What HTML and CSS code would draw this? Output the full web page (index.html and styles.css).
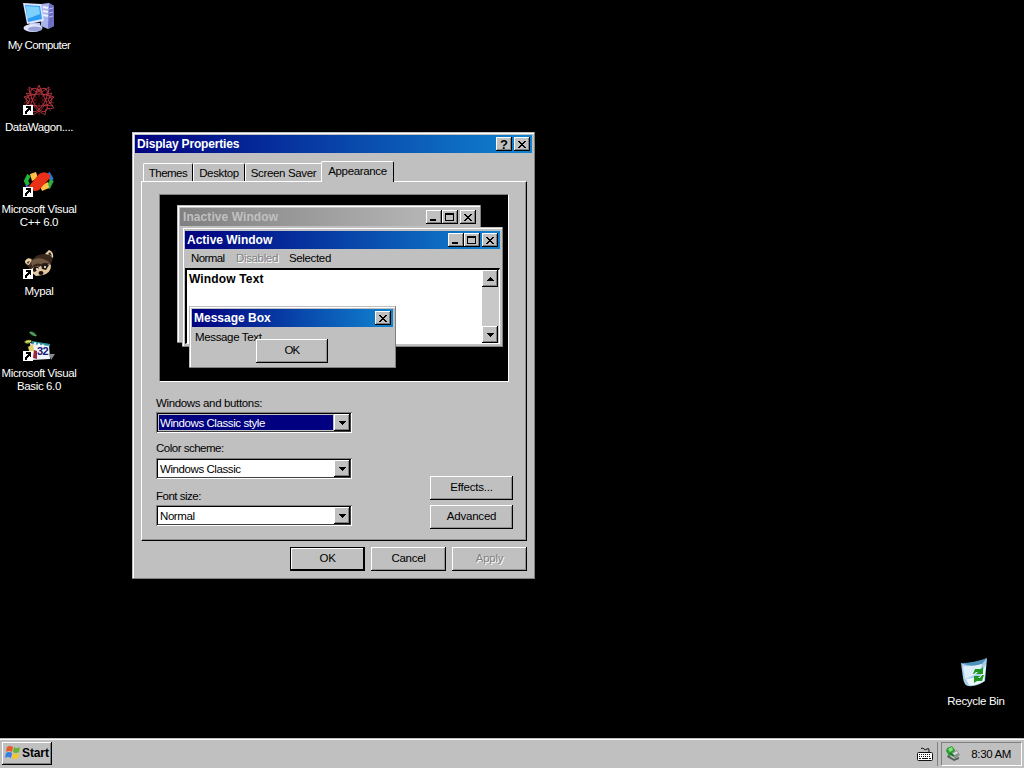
FILE: index.html
```html
<!DOCTYPE html>
<html lang="en">
<head>
<meta charset="utf-8">
<title>Desktop</title>
<link rel="stylesheet" href="styles.css">
</head>
<body>
<main class="desktop">
  <nav class="icons">
    <div class="icon">
      <svg width="32" height="32" viewBox="0 0 32 32">
        <path d="M18 2l8-1 5 3v20l-6 3-7-3z" fill="#aab4ec"/><path d="M26 1l5 3v20l-6 3z" fill="#6c70c4"/><path d="M20 5l5 1M20 9l5 1M20 13l5 1" stroke="#eef" stroke-width="2"/><path d="M26 7l4-1M26 11l4-1M26 15l4-1" stroke="#b9c0f4"/>
        <path d="M7 20l10 1 1 5-12-1z" fill="#b8bfe9"/><ellipse cx="10" cy="26" rx="9.500" ry="4" fill="#dfe4fb"/><ellipse cx="12" cy="27" rx="7" ry="2.500" fill="#9aa0d8"/>
        <path d="M0 1l18 1 3 17-17 3z" fill="#dce4ff"/><path d="M2 3l15 1 2 13-14 3z" fill="#2c9cf4"/><path d="M3 4l13 1 1 7-13 5z" fill="#7ed0ff"/>
      </svg>
      <span class="computer">My Computer</span>
    </div>
    <div class="icon">
      <svg width="32" height="32" viewBox="0 0 32 32">
        <g fill="none" stroke="#b23540" stroke-width=".9">
          <path stroke="#7c1c22" d="M4 5l24 22M28 5L4 27M16 1v30M1 13l30 6M31 13L1 19"/>
          <path d="M16 1l3 7 7-5-1 8 6 2-5 5 5 6-8 1-1 6-6-4-6 4-1-6-8-1 5-6-5-5 6-2-1-8 7 5z"/>
          <path d="M16 5l5 6 8-2-4 7 5 6-8-1-6 7-6-7-8 1 5-6-4-7 8 2z"/>
          <ellipse cx="16" cy="16" rx="13" ry="6"/><ellipse cx="16" cy="16" rx="13" ry="6" transform="rotate(60 16 16)"/><ellipse cx="16" cy="16" rx="13" ry="6" transform="rotate(120 16 16)"/>
        </g>
        <circle cx="16" cy="16" r="3" fill="#160002"/>
        <use href="#shortcut"/>
      </svg>
      <span>DataWagon....</span>
    </div>
    <div class="icon">
      <svg width="32" height="32" viewBox="0 0 32 32">
        <path d="M6 9L3 15l2 4" fill="none" stroke="#20b535" stroke-width="4"/><path d="M25 7l4 7" stroke="#2877d8" stroke-width="4"/><path d="M29 14l-4 8" stroke="#31a944" stroke-width="4"/>
        <path d="M7 8l6-2 2 6-6 3z" fill="#ffc247"/><path d="M17 20l8-4 1 6-7 3z" fill="#ffc247"/>
        <path d="M6 20L16 8q6-4 11 1v3L16 24q-8 3-10-4z" fill="#e83116"/>
        <path d="M3 19l4 4" stroke="#3c65cc" stroke-width="2"/>
        <use href="#shortcut"/>
      </svg>
      <span>Microsoft Visual<br>C++ 6.0</span>
    </div>
    <div class="icon">
      <svg width="32" height="32" viewBox="0 0 32 32">
        <path d="M2 13q3-5 8-2 4-5 12-5l4-4q5 1 4 8l-2 6q1 7-5 9l-8 3-7-3-3-7q-4-1-3-5z" fill="#3a281d"/>
        <path d="M2 13q3-5 7-1l-3 5q-4-1-4-4zM22 6l4-4q5 2 4 8l-3-3z" fill="#e7cfa8"/><path d="M4 14l3-1-2 3zM25 6l2-2 2 4z" fill="#292019"/>
        <path d="M8 13q8-6 18 1l2 3q-5-4-10-1-6-2-9 3z" fill="#705943"/>
        <path d="M8 21q5-4 8-2 6-5 12-2 0 8-8 10l-7 1-5-4z" fill="#e2c7a0"/>
        <path d="M11 19q3-2 5 1l-4 4-3-1zM18 17q5-3 8 0l-3 5-4-1z" fill="#221914"/><circle cx="14" cy="21" r="1" fill="#fff"/><circle cx="22" cy="19" r="1" fill="#fff"/><ellipse cx="18" cy="25" rx="2.500" ry="2" fill="#17100d"/>
        <use href="#shortcut"/>
      </svg>
      <span>Mypal</span>
    </div>
    <div class="icon">
      <svg width="32" height="32" viewBox="0 0 32 32">
        <path d="M6 2q5-2 8 4-6 1-8-4z" fill="#287a3b"/><path d="M7 2l6 4" stroke="#88b38c"/>
        <path d="M1 12q4-4 8-1-4 5-8 1z" fill="#99a62f"/><path d="M3 12l5-1" stroke="#e9ed9c"/>
        <path d="M7 13l19 1 1 15-18 1z" fill="#eef5fa"/><path d="M9 11l18 3v2L8 14z" fill="#2792a2"/><path d="M11 13l2 1m2 0l2 1m2 0l2 1" stroke="#fff" stroke-width="2"/>
        <path d="M11 20l3 1v8l-4-1z" fill="#9e2640"/><path d="M26 24h6l-4 6z" fill="#898989"/><path d="M5 17l5-3 1 7-4 3z" fill="#e3cf65"/>
        <text x="14" y="25" class="glyph32">32</text>
        <use href="#shortcut"/>
      </svg>
      <span>Microsoft Visual<br>Basic 6.0</span>
    </div>
    <svg width="0" height="0"><defs><g id="shortcut"><path d="M0 21h10v10H0z" fill="#fff"/><path d="M3 22h5v5H7v-1H6v1H5v1H4v2H2v-3h1v-1h1v-1h1v-1H3z" fill="#000"/></g></defs></svg>
  </nav>

  <div class="icon recycle">
    <svg width="32" height="32" viewBox="0 0 32 32">
      <path d="M1 5q7 2 13 0 7-1 13-5l-2 23q-8 6-17 5-4-1-5-8z" fill="#a9cfea"/><path d="M1 5q13 0 26-5l-5 6q-10 4-21-1z" fill="#4f91bd"/><path d="M3 8q9 1 19-2l-3 9-14 6z" fill="#deeff9"/><path d="M6 21l14-2 6-13-2 17q-8 5-15 4z" fill="#eef8ff"/>
      <path d="M13 16l2-5h6l2-2v7h-7l2-2h-2l-2 2zM24 17l-2 6h-5l-3 2v-7h6l-2 2h2l2-3z" fill="#219621"/>
    </svg>
    <span>Recycle Bin</span>
  </div>

  <section class="window dialog">
    <header class="title main"><span>Display Properties</span><i class="grow"></i>
      <button class="sys q">?</button><button class="sys gap2"><svg width="8" height="7"><use href="#x"/></svg></button>
    </header>
    <div class="tabs">
      <span class="tab themes">Themes</span><span class="tab desk">Desktop</span><span class="tab saver">Screen Saver</span><span class="tab on">Appearance</span>
    </div>
    <div class="panel">
      <div class="preview">
        <div class="window inactive">
          <div class="title dim"><span>Inactive Window</span><i class="grow"></i>
            <b class="sys"><svg width="8" height="7"><use href="#min"/></svg></b><b class="sys"><svg width="10" height="8"><use href="#max"/></svg></b><b class="sys gap2"><svg width="8" height="7"><use href="#x"/></svg></b></div>
        </div>
        <div class="window active">
          <div class="title"><span>Active Window</span><i class="grow"></i>
            <b class="sys"><svg width="8" height="7"><use href="#min"/></svg></b><b class="sys"><svg width="10" height="8"><use href="#max"/></svg></b><b class="sys gap2"><svg width="8" height="7"><use href="#x"/></svg></b></div>
          <div class="menu"><span class="m1">Normal</span><span class="m2 disabled">Disabled</span><span>Selected</span></div>
          <div class="doc"><span class="t-doc">Window Text</span><div class="scroll"><b class="arrow"><svg width="7" height="4"><use href="#up"/></svg></b><b class="arrow"><svg width="7" height="4"><use href="#down"/></svg></b></div></div>
        </div>
        <div class="window message">
          <div class="title"><span>Message Box</span><i class="grow"></i><b class="sys"><svg width="8" height="7"><use href="#x"/></svg></b></div>
          <div class="msgtext">Message Text</div>
          <div class="btn msgok">OK</div>
        </div>
      </div>
      <div class="form">
        <div class="fields">
          <label class="l1">Windows and buttons:</label>
          <div class="combo"><span class="val sel">Windows Classic style</span><b class="arrow"><svg width="7" height="4"><use href="#down"/></svg></b></div>
          <label class="l2">Color scheme:</label>
          <div class="combo"><span class="val">Windows Classic</span><b class="arrow"><svg width="7" height="4"><use href="#down"/></svg></b></div>
          <label class="l3">Font size:</label>
          <div class="combo"><span class="val">Normal</span><b class="arrow"><svg width="7" height="4"><use href="#down"/></svg></b></div>
        </div>
        <div class="side"><button class="btn">Effects...</button><button class="btn">Advanced</button></div>
      </div>
    </div>
    <footer class="actions"><button class="btn default">OK</button><button class="btn">Cancel</button><button class="btn disabled">Apply</button></footer>
    <svg width="0" height="0"><defs>
      <path id="x" shape-rendering="crispEdges" d="M0 0h2v1h1v1h2V1h1V0h2v1H7v1H6v1H5v1h1v1h1v1h1v1H6V6H5V5H3v1H2v1H0V6h1V5h1V4h1V3H2V2H1V1H0z"/>
      <path id="min" d="M0 5h6v2H0z"/>
      <path id="max" fill-rule="evenodd" d="M0 0h9v8H0zM1 2v5h7V2z"/>
      <path id="up" shape-rendering="crispEdges" d="M3 0h1v1h1v1h1v1h1v1H0V3h1V2h1V1h1z"/>
      <path id="down" shape-rendering="crispEdges" d="M0 0h7v1H6v1H5v1H4v1H3V3H2V2H1V1H0z"/>
    </defs></svg>
  </section>
</main>
<footer class="taskbar">
  <button class="start">
    <svg width="17" height="16" viewBox="0 0 17 16"><path d="M3 2q3-2 6 0L8 7Q5 5 2 7z" fill="#e65a27"/><path d="M10 2q3 2 6 0l-1 5q-3 2-6 0z" fill="#65b632"/><path d="M2 8q3-2 6 0l-1 5q-3-2-6 0z" fill="#347de1"/><path d="M9 8q3 2 6 0l-1 5q-3 2-6 0z" fill="#f5c52b"/></svg>
    <span>Start</span>
  </button>
  <i class="grow"></i>
  <svg class="kbd" width="18" height="15" viewBox="0 0 18 15"><path d="M5 1.500q2-1 3 .5t3 0 2 1v2" fill="none" stroke="#111"/><rect x="1.500" y="5.500" width="15" height="8" rx="1" fill="#fff" stroke="#111"/><path d="M3 7.500h12M3 9.500h12" stroke="#111" stroke-dasharray="1 1"/><path d="M3 11.500h2m1 0h6m1 0h2" stroke="#111"/></svg>
  <div class="tray">
    <svg width="16" height="17" viewBox="0 0 16 17"><path d="M2 2l5-2 3 4-1 5-5 1-3-5z" fill="#2f9f35"/><path d="M3 3l4-2 1 3-3 2z" fill="#8be07d"/><path d="M6 7l6-3 3 5-5 4z" fill="#8c9393"/><path d="M7 8l5-3 1 2-5 3z" fill="#d8dfdc"/><path d="M3 9l6 4 5-2v2l-5 2-7-4z" fill="#53605b"/><path d="M5 7l4 3" stroke="#127a21" stroke-width="2"/></svg>
    <span>8:30 AM</span>
  </div>
</footer>
</body>
</html>
```

FILE: styles.css
```css
* { box-sizing: border-box; }
body { margin: 0; width: 1024px; height: 768px; overflow: hidden; display: flex; flex-direction: column; background: #000; color: #000; font: 11.5px/13px "Liberation Sans", Arial, sans-serif; letter-spacing: -.35px; white-space: nowrap; }
button { font: inherit; letter-spacing: inherit; color: inherit; border: 0; padding: 0; }
svg { display: block; flex: none; }
.grow { flex: 1; }
.desktop { position: relative; flex: 1; }

/* Desktop icons */
.icons { width: 78px; padding-top: 2px; display: flex; flex-direction: column; }
.icon { height: 82px; display: flex; flex-direction: column; align-items: center; gap: 5px; color: #fff; text-align: center; letter-spacing: -.38px; }
.computer { letter-spacing: -.6px; }
.recycle { position: absolute; left: 936px; top: 658px; width: 80px; letter-spacing: -.3px; }
.glyph32 { font: bold 11px "Liberation Sans", sans-serif; fill: #171a78; letter-spacing: -.5px; }

/* Windows and title bars */
.window { background: #c0c0c0; padding: 3px; box-shadow: inset -1px -1px #808080, inset 1px 1px #c0c0c0, inset 2px 2px #fff; }
.dialog { position: absolute; left: 132px; top: 132px; width: 403px; height: 447px; display: flex; flex-direction: column; }
.title { height: 18px; display: flex; align-items: center; padding: 0 2px; color: #fff; font-size: 12px; font-weight: bold; background: linear-gradient(90deg, #000080, #1084d0); letter-spacing: 0; }
.title.main { letter-spacing: -.18px; }
.title.dim { padding-left: 3px; color: #c0c0c0; background: linear-gradient(90deg, #808080, #c0c0c0); letter-spacing: .08px; }
.sys { width: 16px; height: 14px; display: flex; align-items: center; justify-content: center; background: #c0c0c0; color: #000; box-shadow: inset -1px -1px #000, inset 1px 1px #fff, inset -2px -2px #808080; }
.sys.gap2 { margin-left: 2px; }
.q { font-weight: bold; font-size: 13px; }

/* Tabs and panel */
.tabs { height: 21px; margin: 7px 0 0 8px; display: flex; align-items: flex-end; }
.tab { height: 18px; padding-top: 3px; text-align: center; border: solid #fff; border-width: 1px 1px 0 1px; border-right-color: #000; border-radius: 2px 2px 0 0; }
.themes { width: 50px; letter-spacing: -.5px; }
.desk { width: 52px; }
.saver { width: 77px; }
.tab.on { position: relative; z-index: 1; width: 73px; height: 21px; margin: 0 0 -1px -1px; background: #c0c0c0; }
.panel { height: 360px; margin: 0 5px 0 6px; border: 1px solid #fff; border-right-color: #000; border-bottom-color: #000; box-shadow: inset -1px -1px #909090; padding: 12px 13px 0 17px; }

/* Appearance preview */
.preview { position: relative; width: 350px; height: 188px; background: #000; border: 1px solid #808080; border-right-color: #fff; border-bottom-color: #fff; }
.inactive { position: absolute; left: 17px; top: 10px; width: 304px; height: 138px; }
.active { position: absolute; left: 22px; top: 32px; width: 321px; height: 120px; padding-top: 4px; }
.message { position: absolute; left: 29px; top: 111px; width: 207px; height: 62px; }
.menu { display: flex; height: 19px; padding: 3px 0 0 6px; }
.m1 { width: 45px; letter-spacing: -.6px; }
.m2 { width: 53px; }
.disabled { color: #808080; text-shadow: 1px 1px #fff; }
.doc { height: 76px; display: flex; justify-content: space-between; padding-left: 2px; background: #fff; border: 2px solid #000; border-width: 2px 1px 1px 2px; border-right-color: #fff; border-bottom-color: #fff; font-size: 12px; font-weight: bold; letter-spacing: .15px; }
.t-doc { padding-top: 3px; }
.scroll { width: 17px; background: #c8c8c8; display: flex; flex-direction: column; justify-content: space-between; }
.arrow { width: 16px; height: 17px; display: flex; align-items: center; justify-content: center; background: #c0c0c0; box-shadow: inset -1px -1px #000, inset 1px 1px #fff, inset -2px -2px #808080; }
.msgtext { padding: 4px 0 0 3px; }
.btn { display: flex; align-items: center; justify-content: center; background: #c0c0c0; height: 24px; width: 75px; padding-bottom: 2px; box-shadow: inset -1px -1px #000, inset 1px 1px #fff, inset -2px -2px #909090; }
.btn.msgok { position: absolute; left: 67px; top: 33px; width: 72px; padding-bottom: 1px; letter-spacing: -.9px; }

/* Form */
.form { display: flex; justify-content: space-between; margin-left: -3px; }
.fields { width: 196px; }
.fields label { display: block; height: 30px; padding-top: 15px; }
.fields .l2 { height: 25px; padding-top: 9px; letter-spacing: -.5px; }
.fields .l3 { height: 26px; padding-top: 11px; letter-spacing: -.5px; }
.combo { height: 21px; display: flex; background: #fff; padding: 2px; box-shadow: inset 1px 1px #808080, inset -1px -1px #fff, inset 2px 2px #000, inset -2px -2px #404040; }
.val { flex: 1; padding: 3px 0 0 2px; letter-spacing: -.42px; }
.sel { background: #000080; color: #fff; box-shadow: inset 0 0 0 1px #c0c0c0; }
.side { padding-top: 94px; display: flex; flex-direction: column; gap: 5px; }
.side .btn { width: 83px; letter-spacing: -.2px; }
.actions { display: flex; justify-content: flex-end; gap: 6px; padding: 6px 5px 0 0; }
.actions .btn { letter-spacing: -.3px; }
.default { box-shadow: inset 0 0 0 1px #000, inset -2px -2px #000, inset 2px 2px #fff; }

/* Taskbar */
.taskbar { height: 30px; display: flex; align-items: center; background: #c0c0c0; box-shadow: inset 0 1px #c0c0c0, inset 0 2px #fff; padding: 2px 2px 0 2px; }
.start { width: 50px; height: 23px; margin-bottom: 2px; padding-left: 2px; display: flex; align-items: center; gap: 1px; background: #c0c0c0; font-size: 12px; font-weight: bold; letter-spacing: -.1px; box-shadow: inset -1px -1px #000, inset 1px 1px #fff, inset -2px -2px #808080; }
.kbd { margin-right: 4px; }
.tray { height: 24px; width: 81px; margin-left: 3px; padding: 0 10px 0 3px; display: flex; align-items: center; justify-content: space-between; border: 1px solid #808080; border-right-color: #fff; border-bottom-color: #fff; box-shadow: -3px 0 #c0c0c0, -4px 0 #808080; }
```
